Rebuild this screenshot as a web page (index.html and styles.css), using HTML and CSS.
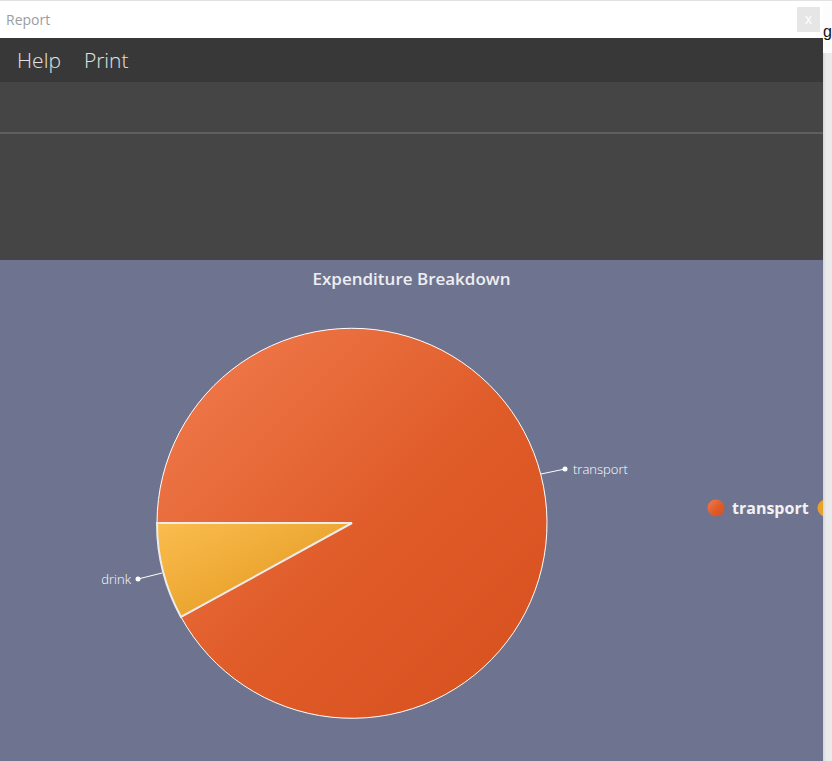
FILE: index.html
```html
<!DOCTYPE html>
<html>
<head>
<meta charset="utf-8" />
<title>Report</title>
<link rel="stylesheet" href="styles.css">
</head>
<body>
<div class="desk">
	<div class="dialog">
		<div class="titlebar">
			<span class="title">Report</span>
			<button class="close">x</button>
		</div>
		<nav class="menu">
			<a href="#">Help</a>
			<a href="#">Print</a>
		</nav>
		<div class="toolbar"></div>
		<div class="filters"></div>
		<div class="chart">
			<h2>Expenditure Breakdown</h2>
			<svg class="plot" width="823" height="500" viewBox="0 0 823 500">
				<defs>
					<linearGradient id="gTransport" x1="0" y1="0" x2="1" y2="1">
						<stop offset="0" stop-color="#f27d50"/>
						<stop offset="0.55" stop-color="#df5b28"/>
						<stop offset="1" stop-color="#d6501e"/>
					</linearGradient>
					<linearGradient id="gDrink" x1="0" y1="0" x2="1" y2="1">
						<stop offset="0" stop-color="#fbbd4f"/>
						<stop offset="1" stop-color="#df9418"/>
					</linearGradient>
				</defs>
				<path d="M352 263 L181 357 A195 195 0 1 0 157 263 Z" fill="url(#gTransport)" stroke="#fff" stroke-width="1"/>
				<path d="M352 263 L157 263 A195 195 0 0 0 181 357 Z" fill="url(#gDrink)" stroke="#ececec" stroke-width="2"/>

				<path d="M541 214 L565 209" stroke="#fff" stroke-width="1" fill="none"/>
				<circle cx="565" cy="209" r="2.5" fill="#fff"/>
				<text class="lbl" x="573" y="214">transport</text>

				<path d="M162 313 L138 319" stroke="#fff" stroke-width="1" fill="none"/>
				<circle cx="138" cy="319" r="2.5" fill="#fff"/>
				<text class="lbl" x="131" y="324" text-anchor="end">drink</text>

				<circle cx="716" cy="248" r="8.5" fill="url(#gTransport)"/>
				<text class="legend" x="732" y="254">transport</text>
				<circle cx="826" cy="248" r="8.5" fill="#e8a12b"/>
			</svg>
		</div>
	</div>
	<div class="behind"><span>ge</span></div>
</div>
</body>
</html>
```

FILE: styles.css
```css
html, body{
	margin:0;
	padding:0;
	height:100%;
	background:#ececec;
	font-family:"Open Sans", "Liberation Sans", sans-serif;
	overflow:hidden;
}
.desk{
	display:flex;
	border-top:1px solid #e2e2e2;
	height:760px;
	border-bottom:1px solid #cdcdcd;
}
.dialog{
	width:823px;
	flex:none;
	display:flex;
	flex-direction:column;
	overflow:hidden;
}
.titlebar{
	height:37px;
	background:#fff;
	display:flex;
	align-items:center;
	justify-content:space-between;
	padding:0 3px 0 6px;
}
.title{font-size:14px; color:#9a9ca3;}
.close{
	width:23px;
	height:25px;
	border:0;
	background:#e6e6e6;
	color:#fff;
	font:14px/25px "Liberation Sans", sans-serif;
	padding:0;
}
.menu{
	height:44px;
	background:#383838;
	display:flex;
	align-items:center;
	gap:23px;
	padding-left:17px;
}
.menu a{
	color:#e2e2e2;
	text-decoration:none;
	font-size:21px;
	font-weight:300;
}
.toolbar{
	height:50px;
	background:#454545;
	border-bottom:2px solid #5f5f5f;
}
.filters{
	height:126px;
	background:#454545;
}
.chart{
	flex:1;
	background:#6e7490;
	position:relative;
}
.chart h2{
	position:absolute;
	top:7px;
	left:0;
	right:0;
	margin:0;
	text-align:center;
	font-size:17px;
	font-weight:600;
	color:#eeeef2;
}
.plot{display:block;}
.lbl{
	font-family:"Open Sans", sans-serif;
	font-size:13px;
	font-weight:300;
	fill:#fff;
}
.legend{
	font-family:"Open Sans", sans-serif;
	font-size:16px;
	font-weight:700;
	fill:#f2f2f4;
}
.behind{
	flex:1;
	background:#ebebeb;
	box-shadow:inset 3px 0 3px -2px #cfcfcf;
	display:flex;
	flex-direction:column;
	overflow:hidden;
}
.behind span{
	display:block;
	height:52px;
	background:#fdfdfd;
	font:16px/62px "Liberation Sans", sans-serif;
	color:#111;
	white-space:nowrap;
}
```
